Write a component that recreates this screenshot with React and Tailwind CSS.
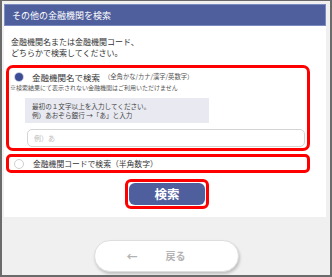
import React from "react";

const font = { fontFamily: '"Noto Sans CJK JP", "Noto Sans", sans-serif' };

export default function App() {
  return (
    <div
      className="w-[332px] h-[277px] bg-[#f0f0f0] border-x-2 border-b-2 border-t border-[#6b6b6b] overflow-hidden"
      style={font}
    >
      <div className="ml-[2px] mt-[3px] w-[322px] h-[213px] bg-white">
        <div className="h-[22px] bg-[#4f5f9d] border border-[#7d8cc0] flex items-center pl-[7px] text-white text-[9px] leading-none">
          その他の金融機関を検索
        </div>

        <div className="pl-[7px] pt-[10px] text-[8px] leading-[11px] text-[#333]">
          <p>金融機関名または金融機関コード、</p>
          <p>どちらかで検索してください。</p>
        </div>

        <div className="mt-[7px] ml-[2px] w-[304px] h-[86px] border-[3px] border-[#ff0000] rounded-[7px] pt-[3px]">
          <div className="flex items-center pl-[5px]">
            <span className="w-[10px] h-[10px] rounded-full border border-[#c8cbe0] flex items-center justify-center">
              <span className="w-[8px] h-[8px] rounded-full bg-[#3c4d96]" />
            </span>
            <span className="ml-[8px] text-[8.5px] leading-[12px] text-[#333]">金融機関名で検索</span>
            <span className="ml-[4px] text-[6.3px] leading-[12px] text-[#555]">（全角かな/カナ/漢字/英数字）</span>
          </div>
          <p className="pl-[1px] mt-[1px] text-[6px] leading-[8px] text-[#555] whitespace-nowrap">
            ※検索結果にて表示されない金融機関はご利用いただけません
          </p>
          <div className="ml-[16px] mt-[6px] w-[184px] h-[25px] bg-[#e8e9f1] pl-[7px] pt-[4px] text-[6.6px] leading-[9px] text-[#444]">
            <p>最初の１文字以上を入力してください。</p>
            <p>例）あおぞら銀行 →「あ」と入力</p>
          </div>
          <div className="ml-[18px] mt-[6px] w-[278px] h-[18px] border border-[#d4d4d4] rounded-[5px] flex items-center pl-[6px] text-[7px] text-[#bdbdbd]">
            例）あ
          </div>
        </div>

        <div className="mt-[3px] ml-[2px] w-[304px] h-[19px] border-[3px] border-[#ff0000] rounded-[5px] flex items-center pl-[5px]">
          <span className="w-[10px] h-[10px] rounded-full border border-[#d0d0d0]" />
          <span className="ml-[9px] text-[7.8px] leading-none text-[#333]">金融機関コードで検索（半角数字）</span>
        </div>

        <div className="flex justify-center mt-[6px]">
          <div className="w-[84px] h-[30px] border-[3px] border-[#ff0000] rounded-[6px] p-[1px] ml-[4px]">
            <div className="h-full rounded-[6px] bg-[#4f5f9d] flex items-center justify-center text-white text-[12.5px] font-bold leading-none">
              検索
            </div>
          </div>
        </div>
      </div>

      <div className="flex justify-center mt-[23px]">
        <div className="w-[145px] h-[32px] rounded-full bg-white border border-[#dedede] shadow-[1px_2px_3px_rgba(0,0,0,0.2)] flex items-center text-[#b3b3b3] font-bold">
          <span className="ml-[32px] text-[11px] leading-none">←</span>
          <span className="ml-[28px] text-[10px] leading-none">戻る</span>
        </div>
      </div>
    </div>
  );
}
